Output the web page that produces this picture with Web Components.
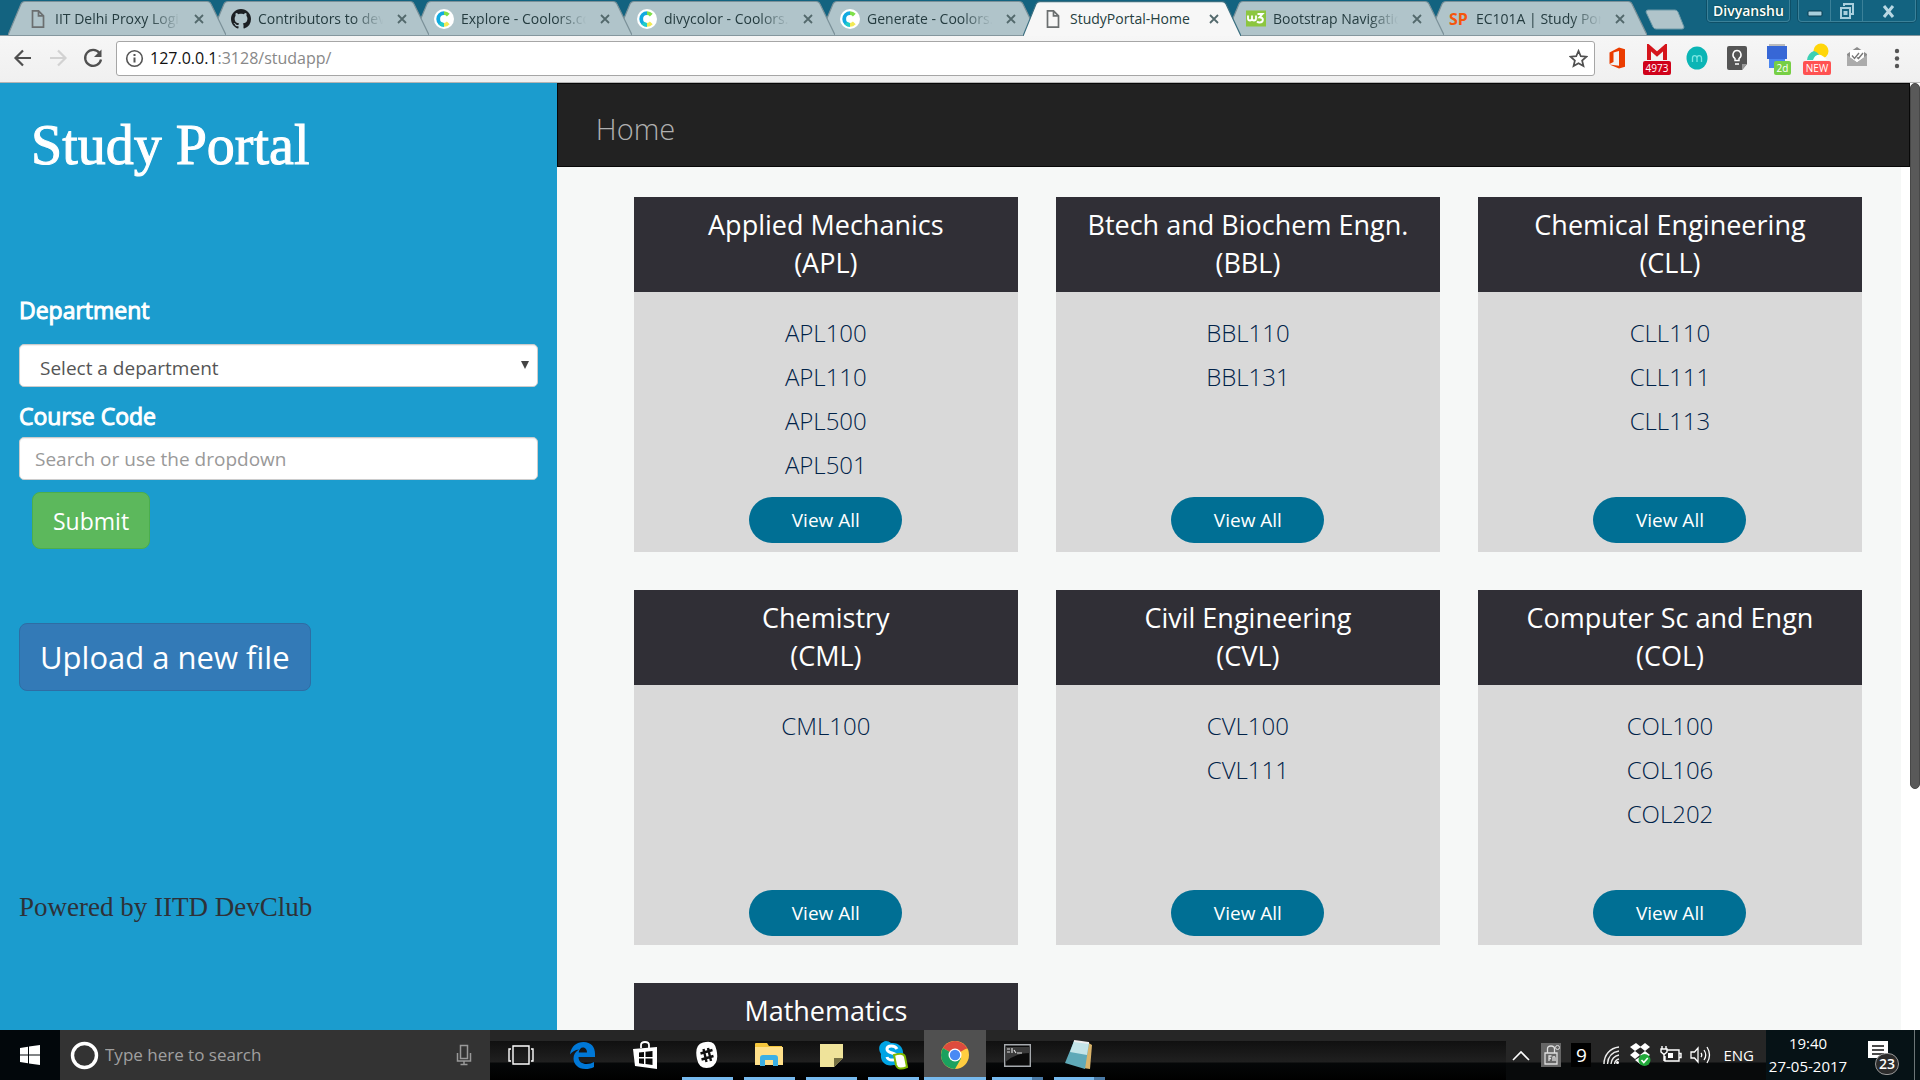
<!DOCTYPE html>
<html lang="en">
<head>
<meta charset="utf-8">
<title>StudyPortal-Home</title>
<style>
html, body { margin: 0; height: 100%; }
body { display: flex; flex-direction: column; overflow: hidden; background: #000; font-family: "Open Sans", "Noto Sans", sans-serif; }
</style>
</head>
<body>
<tab-strip>
  <browser-tab icon="file">IIT Delhi Proxy Login</browser-tab>
  <browser-tab icon="github">Contributors to devclub</browser-tab>
  <browser-tab icon="coolors">Explore - Coolors.co</browser-tab>
  <browser-tab icon="coolors">divycolor - Coolors.co</browser-tab>
  <browser-tab icon="coolors">Generate - Coolors.co</browser-tab>
  <browser-tab icon="file" active>StudyPortal-Home</browser-tab>
  <browser-tab icon="w3">Bootstrap Navigation</browser-tab>
  <browser-tab icon="sp">EC101A | Study Portal</browser-tab>
</tab-strip>
<browser-toolbar></browser-toolbar>
<study-page>
  <course-card name="Applied Mechanics" code="APL"><a href="#">APL100</a><a href="#">APL110</a><a href="#">APL500</a><a href="#">APL501</a></course-card>
  <course-card name="Btech and Biochem Engn." code="BBL"><a href="#">BBL110</a><a href="#">BBL131</a></course-card>
  <course-card name="Chemical Engineering" code="CLL"><a href="#">CLL110</a><a href="#">CLL111</a><a href="#">CLL113</a></course-card>
  <course-card name="Chemistry" code="CML"><a href="#">CML100</a></course-card>
  <course-card name="Civil Engineering" code="CVL"><a href="#">CVL100</a><a href="#">CVL111</a></course-card>
  <course-card name="Computer Sc and Engn" code="COL"><a href="#">COL100</a><a href="#">COL106</a><a href="#">COL202</a></course-card>
  <course-card name="Mathematics"></course-card>
</study-page>
<task-bar></task-bar>

<script>
const BASE = '<style>:host,*,*::before,*::after{box-sizing:border-box}svg{display:block}button{border:0;margin:0;padding:0;background:none;color:inherit;font:inherit;cursor:pointer}a{text-decoration:none}</style>';

function define(name, render) {
  customElements.define(name, class extends HTMLElement {
    connectedCallback() {
      if (this.shadowRoot) return;
      const t = document.createElement('template');
      t.innerHTML = BASE + render(this);
      this.attachShadow({ mode: 'open' }).append(t.content.cloneNode(true));
    }
  });
}

const FAVICONS = {
  file: '<svg width="20" height="20" viewBox="0 0 20 20" fill="none" stroke="#6b6f70" stroke-width="1.7"><path d="M4.5 1.8h6l5 5v11.4h-11zM10.5 1.8v5h5"/></svg>',
  github: '<svg width="20" height="20" viewBox="0 0 16 16" fill="#1b1f23"><path d="M8 0C3.58 0 0 3.58 0 8c0 3.54 2.29 6.53 5.47 7.59.4.07.55-.17.55-.38 0-.19-.01-.82-.01-1.49-2.01.37-2.53-.49-2.69-.94-.09-.23-.48-.94-.82-1.13-.28-.15-.68-.52-.01-.53.63-.01 1.08.58 1.23.82.72 1.21 1.87.87 2.33.66.07-.52.28-.87.51-1.07-1.78-.2-3.64-.89-3.64-3.95 0-.87.31-1.59.82-2.15-.08-.2-.36-1.02.08-2.12 0 0 .67-.21 2.2.82.64-.18 1.32-.27 2-.27s1.36.09 2 .27c1.53-1.04 2.2-.82 2.2-.82.44 1.1.16 1.92.08 2.12.51.56.82 1.27.82 2.15 0 3.07-1.87 3.75-3.65 3.95.29.25.54.73.54 1.48 0 1.07-.01 1.93-.01 2.2 0 .21.15.46.55.38A8.01 8.01 0 0016 8c0-4.42-3.58-8-8-8z"/></svg>',
  coolors: '<svg width="20" height="20" viewBox="0 0 20 20"><circle cx="10" cy="10" r="10" fill="#fff"/><g fill="none" stroke-width="3.8"><path d="M10 4.2A5.8 5.8 0 0 0 10 15.8" stroke="#12a9e0"/><path d="M5.9 14.1A5.8 5.8 0 0 0 10 15.8" stroke="#22cdc8"/><path d="M10 4.2a5.8 5.8 0 0 1 4.3 1.9" stroke="#7fe04a"/><path d="M10 15.8a5.8 5.8 0 0 0 4.3-1.9" stroke="#f2ea55"/></g></svg>',
  w3: '<svg width="20" height="20" viewBox="0 0 20 20"><path fill="#8cc63f" d="M0 1.5h20v16H0z"/><path d="M2 6.5v3q0 2 2 2t2-2v-3 3q0 2 2 2t2-2v-3" fill="none" stroke="#fff" stroke-width="1.8"/><path d="M11.500 5h5l-3 3.200c4.500 0 4.500 5.300 0 5.300q-1.500 0-2.500-1" fill="none" stroke="#fff" stroke-width="1.900"/></svg>',
  sp: '<b class="sp">SP</b>'
};

define('browser-tab', el => {
  const on = el.hasAttribute('active');
  return `
<style>
:host { position: relative; display: flex; flex: 0 1 218px; min-width: 0; height: 35px; margin-right: -15px; align-items: center; gap: 7px; padding: 2px 18px 0 20px; color: ${on ? '#26403f' : '#253c40'}; font-size: 14px; }
.shape { position: absolute; inset: 0; width: 100%; height: 100%; z-index: -1; }
.sp { color: #f4560c; font-size: 16px; line-height: 20px; width: 20px; }
.label { flex: 1; min-width: 0; overflow: hidden; white-space: nowrap; line-height: 22px; ${on ? '' : '-webkit-mask-image: linear-gradient(90deg,#000 74%,transparent 98%); mask-image: linear-gradient(90deg,#000 74%,transparent 98%);'} }
.x { flex: none; width: 18px; height: 18px; display: grid; place-items: center; color: #53696c; }
</style>
<svg class="shape" viewBox="0 0 218 35" preserveAspectRatio="none"><path d="M0 35 13 4Q14 1.500 17 1.500H199Q202 1.500 203 4L218 35" fill="${on ? '#f7f7f7' : '#b0c4ca'}" stroke="${on ? '#3b6f80' : '#7b9199'}" stroke-width="1.200"/></svg>
${FAVICONS[el.getAttribute('icon')]}
<span class="label"><slot></slot></span>
<button class="x" aria-label="Close tab"><svg width="10" height="10" viewBox="0 0 10 10" stroke="currentColor" stroke-width="1.800"><path d="M1 1l8 8M9 1l-8 8"/></svg></button>`;
});

define('tab-strip', () => `
<style>
:host { flex: none; display: flex; justify-content: space-between; height: 36px; background: #136380; border-bottom: 1px solid #85979e; position: relative; z-index: 1; }
.tabs { display: flex; flex: 0 1 1700px; min-width: 0; padding-left: 8px; align-items: flex-start; }
::slotted(browser-tab) { z-index: 1; }
::slotted(browser-tab:nth-child(1)) { z-index: 8; } ::slotted(browser-tab:nth-child(2)) { z-index: 7; }
::slotted(browser-tab:nth-child(3)) { z-index: 6; } ::slotted(browser-tab:nth-child(4)) { z-index: 5; }
::slotted(browser-tab:nth-child(5)) { z-index: 4; } ::slotted(browser-tab:nth-child(6)) { z-index: 10; height: 36px; margin-bottom: -1px; }
::slotted(browser-tab:nth-child(7)) { z-index: 3; }
.new { flex: none; margin: 9px 0 0 12px; }
.win { display: flex; gap: 8px; padding-right: 4px; color: #fff; }
.user, .ctl { border: 1px solid #3b8199; border-top: 0; border-radius: 0 0 4px 4px; box-shadow: 0 0 0 1px #0e5068; height: 22px; }
.user { width: 83px; font-size: 14px; line-height: 21px; font-weight: 600; text-shadow: 0 0 2px #032; }
.ctl { display: flex; }
.ctl button { display: grid; place-items: center; width: 32px; border-right: 1px solid #3b8199; }
.ctl button:last-child { width: 52px; border: 0; }
</style>
<div class="tabs"><slot></slot><button class="new" aria-label="New tab"><svg width="42" height="21" viewBox="0 0 42 21"><path d="M4 1H31q2 0 3 2l6 15q0 2-2 2H12q-2 0-3-2L2 3q0-2 2-2z" fill="#b0c4ca" stroke="#6f9aa8"/></svg></button></div>
<div class="win"><button class="user">Divyanshu</button>
<div class="ctl">
<button aria-label="Minimize"><svg width="16" height="16"><rect x="1" y="8" width="14" height="5" rx="1" fill="#a9cfdd" stroke="#0b3d50"/></svg></button>
<button aria-label="Restore"><svg width="16" height="18" fill="none" stroke="#a9cfdd" stroke-width="2"><path d="M5 4V2h9v10h-2M2 6h9v10H2zM5.500 10h2v2h-2z"/></svg></button>
<button aria-label="Close"><svg width="14" height="16" stroke="#b9d8e3" stroke-width="3"><path d="M2 3l9 11M11 3L2 14"/></svg></button>
</div></div>`);

define('browser-toolbar', () => `
<style>
:host { flex: none; display: flex; align-items: center; height: 47px; padding: 0 9px 2px 11px; background: linear-gradient(#f6f6f6,#f0f0f0); border-bottom: 1px solid #b4b4b4; }
nav { display: flex; gap: 11px; margin-right: 11px; }
form { flex: 1; display: flex; align-items: center; gap: 6px; height: 35px; border: 1px solid #a6a6a6; border-radius: 3px; background: #fff; padding: 0 6px 0 8px; }
.url { flex: 1; display: flex; font-size: 16px; line-height: 24px; color: #888; }
.url b { font-weight: 400; color: #111; }
.ext { display: flex; gap: 12px; margin-left: 8px; }
.ext button { position: relative; width: 28px; height: 34px; display: grid; place-items: center; }
.tag { position: absolute; left: 0; right: 0; bottom: 0; height: 14px; border-radius: 2px; background: #d0021b; color: #fff; font-size: 10px; line-height: 14px; text-align: center; }
.tag.r { background: #ff5252; } .tag.g { background: #76cf45; left: 11px; right: 0; }
</style>
<nav>
<button aria-label="Back"><svg width="24" height="24" fill="none" stroke="#505050" stroke-width="2.200"><path d="M20 12H5M12 4.500L4.500 12l7.500 7.500"/></svg></button>
<button aria-label="Forward"><svg width="24" height="24" fill="none" stroke="#d2d2d2" stroke-width="2.200"><path d="M4 12h15M12 4.500l7.500 7.500-7.500 7.500"/></svg></button>
<button aria-label="Reload"><svg width="24" height="24" fill="none" stroke="#505050" stroke-width="2.300"><path d="M18.500 7A8 8 0 1 0 20 13.500"/><path d="M20.500 3.500V11H13z" fill="#505050" stroke="none"/></svg></button>
</nav>
<form onsubmit="return false">
<svg width="19" height="19" fill="none" stroke="#555" stroke-width="1.600"><circle cx="9.500" cy="9.500" r="7.800"/><path d="M9.500 8.500v5M9.500 5v2" stroke-width="2"/></svg>
<span class="url"><b>127.0.0.1</b>:3128/studapp/</span>
<button aria-label="Bookmark this page"><svg width="19" height="19" viewBox="0 0 20 20" fill="none" stroke="#505050" stroke-width="1.800"><path d="M10 2l2.400 5.600 6 .5-4.600 4 1.400 5.900L10 14.900 4.800 18l1.400-5.900-4.600-4 6-.5z"/></svg></button>
</form>
<div class="ext">
<button aria-label="Office"><svg width="18" height="22" viewBox="0 0 18 22" fill="#eb3c00"><path d="M1.500 5.500 11 .5l6 1.700v17.600L11 21.500l-9.500-4 9.500 1.200V4L5.500 5.500v9.500l-4 2z"/></svg></button>
<button aria-label="Gmail"><svg width="22" height="18" style="margin-bottom:10px"><path fill="#f3f3f3" d="M2 2h18v14H2z"/><path d="M3 16V3l8 7 8-7v13" fill="none" stroke="#d5151c" stroke-width="4"/></svg><span class="tag">4973</span></button>
<button aria-label="Momentum"><svg width="22" height="24" viewBox="0 0 22 24"><ellipse cx="11" cy="12" rx="10.500" ry="11.500" fill="#0bb5b5"/><path d="M6.500 16v-4q0-2.300 2.200-2.300T11 12v4-4q0-2.300 2.200-2.300t2.300 2.300v4" fill="none" stroke="#7be6e2" stroke-width="1.300"/></svg></button>
<button aria-label="Keep"><svg width="20" height="24" viewBox="0 0 20 24"><path d="M2 0h16q2 0 2 2v16l-5 6H2q-2 0-2-2V2q0-2 2-2z" fill="#555"/><path d="M20 18h-5v6z" fill="#999"/><path d="M8 14.500v-2C4 9.500 6.500 4.500 10 4.500s6 5 2 8v2zM8 18h4" fill="none" stroke="#fff" stroke-width="1.500"/></svg></button>
<button aria-label="Calendar"><svg width="22" height="24" style="margin-bottom:4px"><path fill="#bbb" d="M3 0h16v3H3z"/><path fill="#4a86f0" d="M3 14h16v10H3z"/><path fill="#3767d6" d="M1 2h20v13H1z"/></svg><span class="tag g">2d</span></button>
<button aria-label="Weather"><svg width="24" height="18" style="margin-bottom:12px"><circle cx="16" cy="8" r="7.500" fill="#ffd60a"/><path d="M2 17q1-7 7-9 6 2 7 9z" fill="#3dd0b4"/><path d="M8 17q2-6 8-5 4 2 6 5z" fill="#fff"/></svg><span class="tag r">NEW</span></button>
<button aria-label="Mail tracker"><svg width="22" height="20" style="margin-bottom:2px"><path d="M1 7l10-7 10 7v12H1z" fill="#8c8c8c"/><path d="M4 3h14v10l-7 4-7-4z" fill="#fff"/><path d="M1 8l10 7 10-7v11H1z" fill="#ababab"/><path d="M4 4h14v6l-7 5-7-5z" fill="#fff"/><path d="M6 8.500l2.500 3L13 6M11 10.500l1.500 1L17 6" fill="none" stroke="#777" stroke-width="1.400"/></svg></button>
<button aria-label="Menu"><svg width="6" height="22" fill="#555"><circle cx="3" cy="4" r="2.200"/><circle cx="3" cy="11.500" r="2.200"/><circle cx="3" cy="19" r="2.200"/></svg></button>
</div>`);

define('study-sidebar', () => `
<style>
:host { display: block; background: #1b9cce; color: #fff; padding: 26px 19px 0; }
h1 { margin: 0 0 114px 12px; font: 400 56px/72px "Liberation Serif", serif; -webkit-text-stroke: 1px #fff; }
label { display: block; font-size: 23px; line-height: 30px; -webkit-text-stroke: 1px #fff; }
.field { position: relative; margin: 19px 0 14px; }
select, input { display: block; width: 100%; height: 43px; margin: 0; border: 1px solid #ccc; border-radius: 5px; background: #fff; color: #555; font: 19px/24px "Open Sans", sans-serif; appearance: none; outline: 0; box-shadow: inset 0 1px 1px #0001; }
select { padding: 4px 20px 0; }
input { margin: 6px 0 12px; padding: 0 15px; }
input::placeholder { color: #999; opacity: 1; }
.field svg { position: absolute; right: 8px; top: 17px; pointer-events: none; }
.submit, .upload { display: block; border: 1px solid #4cae4c; background: #5cb85c; border-radius: 8px; color: #fff; }
.submit { margin: 0 0 74px 13px; height: 57px; padding: 0 20px; font-size: 23px; }
.upload { height: 68px; padding: 0 20px; font-size: 31px; background: #337ab7; border-color: #2e6da4; margin-bottom: 196px; }
footer { font: 27px/40px "Liberation Serif", serif; color: #2e3138; }
</style>
<h1>Study Portal</h1>
<form onsubmit="return false">
<label for="dept">Department</label>
<div class="field"><select id="dept"><option>Select a department</option></select><svg width="9" height="8"><path d="M0 0h8L4 8z" fill="#444"/></svg></div>
<label for="code">Course Code</label>
<input id="code" type="text" placeholder="Search or use the dropdown">
<button class="submit">Submit</button>
</form>
<button class="upload">Upload a new file</button>
<footer>Powered by IITD DevClub</footer>`);

define('course-card', el => {
  const code = el.getAttribute('code');
  return `
<style>
:host { display: flex; flex-direction: column; min-height: 355px; background: #d9d9d9; text-align: center; }
h2 { margin: 0; min-height: 95px; padding: 9px 8px 10px; background: #302f36; color: #fff; font-size: 27px; line-height: 38px; font-weight: 400; }
.list { flex: 1; display: flex; flex-direction: column; align-items: center; padding-top: 19px; }
::slotted(a) { color: #002248; font-size: 24px; font-weight: 300; line-height: 44px; text-decoration: none; }
.all { align-self: center; width: 153px; height: 46px; margin-bottom: 9px; border-radius: 23px; background: #006f94; color: #fff; font-size: 19px; line-height: 46px; }
</style>
<h2>${el.getAttribute('name')}${code ? `<br>(${code})` : ''}</h2>
<div class="list"><slot></slot></div>
${code ? '<a class="all" href="#">View All</a>' : ''}`;
});

define('study-page', () => `
<style>
:host { flex: 1; min-height: 0; display: flex; overflow: hidden; background: #fff; }
study-sidebar { flex: 0 0 29%; }
main { flex: 1; display: flex; flex-direction: column; }
nav { flex: none; display: flex; align-items: center; height: 84px; padding: 8px 38px 0; background: #222; border: 1px solid #080808; }
nav a { color: #b0b0b0; font-size: 29px; font-weight: 300; line-height: 40px; }
.grid { flex: 1; display: grid; grid-template-columns: repeat(3, minmax(0, 1fr)); gap: 38px; align-content: start; margin-right: 9px; padding: 30px 39px 0 77px; background: #f6f8f7; min-height: 0; overflow: hidden; }
.scroll { flex: 0 0 10px; background: #fff; }
.thumb { height: 74.5%; border-radius: 5px; background: #595959; border: 1px solid #484848; }
</style>
<study-sidebar></study-sidebar>
<main><nav><a href="#">Home</a></nav><div class="grid"><slot></slot></div></main>
<div class="scroll"><div class="thumb"></div></div>`);

define('task-bar', () => `
<style>
:host { flex: none; display: flex; height: 50px; color: #fff; background: linear-gradient(#262626 0 11px,#101010 11px,#202020 32px,#050708 33px,#000); font-size: 16px; }
button { display: grid; place-items: center; }
.start { width: 60px; background: #02070b; }
.search { width: 430px; display: flex; align-items: center; gap: 6px; padding: 0 18px 0 10px; background: #333; }
.search input { flex: 1; min-width: 0; border: 0; outline: 0; padding: 0; background: none; color: #fff; font: 17px/24px "Open Sans", sans-serif; }
.search input::placeholder { color: #a0a0a0; opacity: 1; }
.apps { display: flex; flex: 1; }
.apps button { position: relative; width: 62px; height: 50px; }
.apps .run::after { content: ""; position: absolute; bottom: 0; left: 6px; right: 5px; height: 3px; background: #76b9ed; }
.apps .multi::after { background: linear-gradient(90deg,#76b9ed 40px,#4a7aa6 40px); }
.apps .on { background: #505050; }
.apps .on::after { left: 0; right: 0; }
.tray { display: flex; align-items: center; background: linear-gradient(#262626 0 32px,#080a0b 33px); }
.tray button { width: 30px; height: 50px; }
.nine { background: #000; width: 20px; height: 24px; font-size: 19px; line-height: 24px; text-align: center; }
.lang { font-size: 15px; padding: 0 12px 0 7px; }
.clock { width: 84px; font-size: 15px; line-height: 23px; text-align: center; white-space: nowrap; }
.right { display: flex; align-items: center; background: #061216; }
.note { position: relative; width: 64px; height: 50px; }
.badge { position: absolute; left: 25px; top: 23px; width: 24px; height: 22px; border: 1px solid #999; border-radius: 12px; background: #2b2b2b; font-size: 14px; line-height: 20px; font-weight: 600; }
.show { width: 6px; height: 50px; border-left: 1px solid #6d7678; }
</style>
<button class="start" aria-label="Start"><svg width="20" height="20" fill="#fff"><path d="M0 3l8-1.200V9.500H0zM9 1.600L20 0v9.500H9zM0 10.500h8v7.800L0 17zM9 10.500h11V20L9 18.400z"/></svg></button>
<div class="search"><svg width="29" height="29"><circle cx="14.500" cy="14.500" r="12" fill="none" stroke="#fff" stroke-width="3.400"/></svg><input aria-label="Search" placeholder="Type here to search"><svg width="16" height="22" fill="none" stroke="#999" stroke-width="1.500"><path d="M4.500 1.500h7v13h-7zM1.500 9v8h13V9M8 17v3.500M4.500 20.500h7"/></svg></div>
<div class="apps">
<button aria-label="Task view"><svg width="26" height="22" fill="none" stroke="#fff" stroke-width="1.400"><path d="M5 2h16v18H5zM3 5H1v12h2M23 5h2v12h-2"/></svg></button>
<button aria-label="Edge"><svg width="26" height="27" viewBox="0 0 26 27"><path d="M0 12.500C1 4 7 0 13.500 0 21 0 25 5 25 11.500V15H8.500c0 5 4 7 8 7 3 0 5.500-.8 7.500-2v5c-2.500 1.500-5.500 2-8.500 2C8 27 3.500 22 3.500 16.500c0-4 2-7 5.500-9-4 .2-7.300 2.500-9 5zM8.700 10.500H17C17 7 15 5.500 12.900 5.500S9 7.500 8.700 10.500z" fill="#0078d7"/></svg></button>
<button aria-label="Store"><svg width="26" height="30"><path d="M9 8V5q0-3 4-3t4 3v3" fill="none" stroke="#fff" stroke-width="1.800"/><path d="M1 9l24-2v22L3 26z" fill="#fff"/><path d="M7 12.500l5-.5V17H7zM13.500 11.800l7-.7V17h-7zM7 18.500h5V24l-5-.7zM13.500 18.500h7V25l-7-.9z" fill="#080808"/></svg></button>
<button class="run" aria-label="Slack"><svg width="24" height="28" viewBox="0 0 24 28"><path d="M8 1.500Q20-2 21.500 9q3 14-6 17.500Q4 29 2 18-1 4 8 1.500z" fill="#fff"/><path d="M8.500 8l3 13M13 7l3 13M5.500 12.500l12-3.500M6.500 18.500l12-3.500" stroke="#111" stroke-width="2.400"/></svg></button>
<button class="run" aria-label="File Explorer"><svg width="28" height="24"><path d="M0 1q0-1 1-1h11l2 3h13v19H0z" fill="#f5c63c"/><path d="M0 4h28v18H0z" fill="#ffe08a"/><path d="M5 23V15q0-3 3-3h12q3 0 3 3v8h-5v-6h-8v6z" fill="#3cb0e5"/></svg></button>
<button class="run" aria-label="Sticky Notes"><svg width="23" height="23"><path d="M0 0h23v14l-9 9H0z" fill="#efe39a"/><path d="M14 14h9l-9 9z" fill="#746f42"/></svg></button>
<button class="run" aria-label="Skype"><svg width="30" height="29"><path d="M8 0q3 0 5 2c8-1 13 5 12 12 2 6-2 12-9 10C7 26 2 20 3 13-1 7 2 1 8 0z" fill="#00a4e4"/><path d="M19 8c-2-4-10-4-10 0 0 5 10 3 10 8 0 4-9 4-10 0" fill="none" stroke="#fff" stroke-width="3"/><path d="M16 14q10-3 11 2l2 10q-9 4-11-2z" fill="#fff" stroke="#7fba00" stroke-width="2"/></svg></button>
<button class="run on" aria-label="Chrome"><svg width="28" height="28" viewBox="0 0 28 28"><circle cx="14" cy="14" r="14" fill="#ffcd40"/><path d="M14 14L1.900 7A14 14 0 0 1 26.100 7z" fill="#dd4b3e"/><path d="M14 7h12.100" stroke="#dd4b3e" stroke-width="1"/><path d="M1.900 7A14 14 0 0 0 14 28l6-10.500-6-3.500z" fill="#1aa15f"/><circle cx="14" cy="14" r="6.500" fill="#fff"/><circle cx="14" cy="14" r="5.200" fill="#4a8af4"/></svg></button>
<button class="run multi" aria-label="Command Prompt"><svg width="27" height="23"><path d="M.7.7h25.600v21.600H.7z" fill="#0b0b0b" stroke="#a6aaae" stroke-width="1.400"/><path d="M1.500 3h24v6q-14 0-24 9z" fill="#3a3a3a"/><path d="M3 5h3M3 8h3M8 4v5M10 6l2 3M13 9h5" stroke="#ddd" stroke-width="1.200"/></svg></button>
<button class="run multi" aria-label="Notepad"><svg width="28" height="30" viewBox="0 0 28 30"><path d="M22 2l5 3-2 24-7-1z" fill="#d9b36a"/><path d="M9 1l15 2-4 26L0 23z" fill="#5fa9b8"/><path d="M9 1l15 2-2 12L5 12z" fill="#c4e4e8"/><path d="M9 1l15 2" stroke="#eee" stroke-width="2"/></svg></button>
</div>
<div class="tray">
<button aria-label="Hidden icons"><svg width="18" height="12" fill="none" stroke="#fff" stroke-width="1.600"><path d="M1 11l8-8 8 8"/></svg></button>
<button aria-label="Fn lock"><svg width="20" height="24"><path fill="#666" d="M0 0h20v24H0z"/><path d="M4 10h12v11H4zM6.500 10V6q0-3 3.500-3t3.500 3v4M8 18v-5h2.500M8 15.500h2M12 18v-4q2-1 2 1v3" fill="none" stroke="#ddd" stroke-width="1.300"/><circle cx="16.500" cy="4.500" r="2" fill="none" stroke="#ddd"/></svg></button>
<button aria-label="Nine"><span class="nine">9</span></button>
<button aria-label="Wi-Fi"><svg width="18" height="20" fill="none" stroke="#eee" stroke-width="1.400"><path d="M2 19C2 10 8 3 17 2M5.500 19C6 12 10 7 17 6M9 19c.5-5 3-8 8-9M12.500 19q.5-4 4.500-5"/><circle cx="15.500" cy="17.500" r="1.500" fill="#fff" stroke="none"/></svg></button>
<button aria-label="Dropbox"><svg width="22" height="24"><path d="M6 0l5 4-6 4-5-4zM15 0l5 4-5 4-5-4zM5 8l5 4-5 4-5-4zM15 8l5 4-5 4-5-4zM5 17l5-3 5 3-5 4z" fill="#fff"/><circle cx="14.500" cy="17" r="6" fill="#22a93a"/><path d="M11.500 17l2.300 2.500 4-4.500" fill="none" stroke="#fff" stroke-width="1.600"/></svg></button>
<button aria-label="Battery"><svg width="22" height="18" fill="none" stroke="#fff" stroke-width="1.400"><path d="M7 4h12v11H5v-5M19 7.500h2v4h-2M1 3h6v3L4 8.500 1 6zM2 3V0M6 3V0M4 8v7"/><path d="M8 7h5v5H8z" fill="#fff" stroke="none"/></svg></button>
<button aria-label="Volume"><svg width="22" height="20" fill="none" stroke="#fff" stroke-width="1.300"><path d="M1 7h3.500L8 3v14l-3.500-4H1zM11 8q1.500 2 0 4M14 5q3.500 5 0 10M17 2q5 8 0 16"/></svg></button>
<span class="lang">ENG</span>
</div>
<div class="right">
<div class="clock">19:40<br>27-05-2017</div>
<button class="note" aria-label="Notifications"><svg width="20" height="22" style="margin:-7px 8px 0 0"><path d="M0 0h20v17h-4v5l-5-5H0z" fill="#fff"/><path d="M4 5h12M4 9h12M4 13h12" stroke="#111" stroke-width="1.600"/></svg><span class="badge">23</span></button>
<span class="show"></span>
</div>`);
</script>
</body>
</html>
